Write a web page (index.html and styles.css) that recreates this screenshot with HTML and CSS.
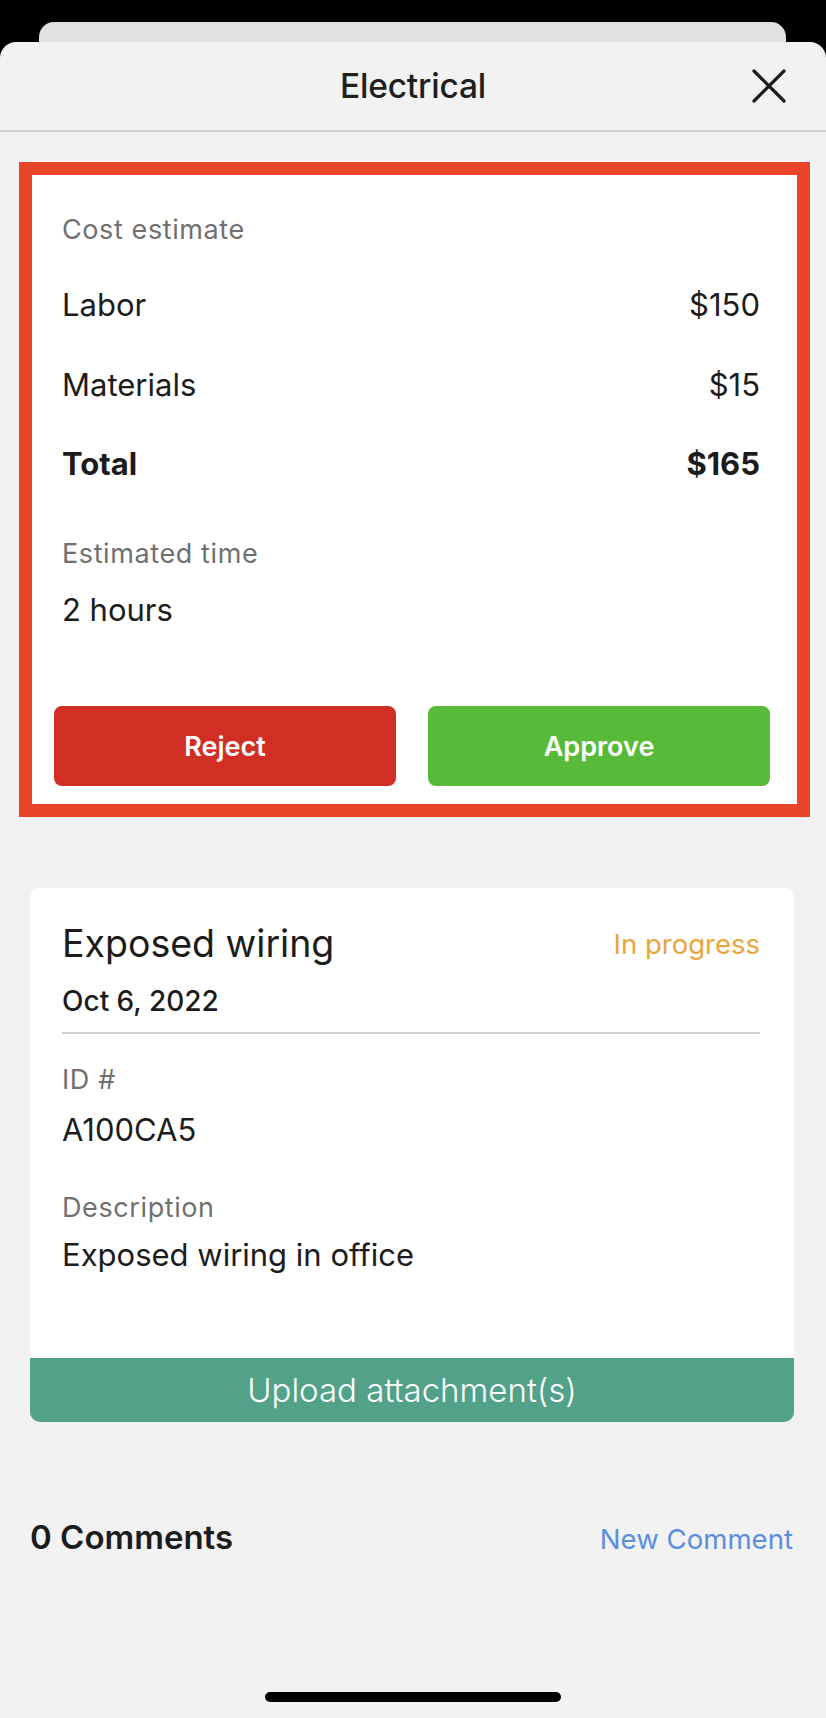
FILE: index.html
```html
<!DOCTYPE html>
<html lang="en">
<head>
<meta charset="utf-8">
<title>Electrical</title>
<link rel="stylesheet" href="styles.css">
</head>
<body>
<div class="screen">
  <div class="back-card"></div>
  <div class="sheet">
    <header class="sheet-header">
      <h1 class="sheet-title">Electrical</h1>
      <button class="close-btn" aria-label="Close">
        <svg width="34" height="34" viewBox="0 0 34 34">
          <path d="M2 2 L32 32 M32 2 L2 32" stroke="#1c1c1c" stroke-width="3.2" stroke-linecap="round" fill="none"/>
        </svg>
      </button>
    </header>

    <section class="estimate">
      <div class="estimate-inner">
        <div class="label first">Cost estimate</div>
        <div class="cost-row r-labor"><span>Labor</span><span>$150</span></div>
        <div class="cost-row r-mat"><span>Materials</span><span>$15</span></div>
        <div class="cost-row r-total total"><span>Total</span><span>$165</span></div>
        <div class="label r-est">Estimated time</div>
        <div class="value r-hours">2 hours</div>
        <div class="actions">
          <button class="btn btn-reject">Reject</button>
          <button class="btn btn-approve">Approve</button>
        </div>
      </div>
    </section>

    <section class="issue-card">
      <div class="issue-body">
        <div class="issue-head">
          <h2 class="issue-title">Exposed wiring</h2>
          <span class="status">In progress</span>
        </div>
        <div class="issue-date">Oct 6, 2022</div>
        <div class="divider"></div>
        <div class="label r-id">ID #</div>
        <div class="value r-idv">A100CA5</div>
        <div class="label r-desc">Description</div>
        <div class="value r-descv">Exposed wiring in office</div>
      </div>
      <button class="upload-btn">Upload attachment(s)</button>
    </section>

    <div class="comments-row">
      <span class="comments-count">0 Comments</span>
      <span class="new-comment">New Comment</span>
    </div>

    <div class="home-indicator"></div>
  </div>
</div>
</body>
</html>
```

FILE: styles.css
```css
* { box-sizing: border-box; }
html, body {
  margin: 0;
  padding: 0;
  background: #000;
}
body {
  font-family: Inter, "Noto Sans", "Liberation Sans", sans-serif;
  color: #1c1c1c;
  width: 826px;
  height: 1718px;
  overflow: hidden;
}
.screen {
  position: relative;
  width: 826px;
  height: 1718px;
  padding-top: 22px;
}
.back-card {
  margin: 0 40px 0 39px;
  height: 40px;
  background: #e0e0e0;
  border-radius: 15px 15px 0 0;
}
.sheet {
  margin-top: -20px;
  background: #f2f2f2;
  border-radius: 16px 16px 0 0;
  height: 1676px;
  display: flex;
  flex-direction: column;
}
.sheet-header {
  position: relative;
  height: 90px;
  border-bottom: 2px solid #cfcfcf;
  display: flex;
  align-items: center;
  justify-content: center;
}
.sheet-title {
  margin: 0;
  font-size: 33.5px;
  font-weight: 500;
  line-height: 40px;
  letter-spacing: -0.2px;
  color: #1f1f1f;
}
.close-btn {
  position: absolute;
  right: 40px;
  top: 27px;
  width: 34px;
  height: 34px;
  padding: 0;
  border: 0;
  background: none;
}
.close-btn svg { display: block; }

.estimate {
  margin: 30px 16px 0 19px;
  border: 13px solid #e9432a;
  background: #fff;
}
.estimate-inner {
  padding: 39px 37px 18px 30px;
}
.label {
  font-size: 27px;
  line-height: 32px;
  letter-spacing: 0.6px;
  color: #707070;
}
.value {
  font-size: 31px;
  line-height: 40px;
  color: #1c1c1c;
}
.cost-row {
  display: flex;
  justify-content: space-between;
  font-size: 31px;
  line-height: 40px;
}
.r-labor { margin-top: 39px; }
.r-mat { margin-top: 40px; }
.r-total { margin-top: 39px; }
.total { font-weight: 700; }
.r-est { margin-top: 54px; }
.r-hours { margin-top: 20px; }
.actions {
  margin-top: 76px;
  display: flex;
  gap: 32px;
  margin-left: -8px;
  margin-right: -10px;
}
.btn {
  flex: 1;
  height: 80px;
  border: 0;
  border-radius: 8px;
  color: #fff;
  font-family: inherit;
  font-size: 27px;
  font-weight: 600;
}
.btn-reject { background: #d22f24; }
.btn-approve { background: #57ba38; }

.issue-card {
  margin: 71px 32px 0 30px;
  background: #fff;
  border-radius: 10px;
  overflow: hidden;
}
.issue-body {
  padding: 32px 34px 83px 32px;
}
.issue-head {
  display: flex;
  justify-content: space-between;
  align-items: center;
}
.issue-title {
  margin: 0;
  font-size: 37.5px;
  font-weight: 400;
  line-height: 48px;
  color: #1c1c1c;
}
.status {
  font-size: 27.5px;
  line-height: 48px;
  color: #e9a53e;
}
.issue-date {
  margin-top: 15px;
  font-size: 28px;
  line-height: 36px;
  font-weight: 500;
}
.divider {
  margin-top: 13px;
  height: 2px;
  background: #cfcfcf;
}
.r-id { margin-top: 30px; }
.r-idv { margin-top: 14px; }
.r-desc { margin-top: 42px; }
.r-descv { margin-top: 11px; }
.upload-btn {
  display: block;
  width: 100%;
  height: 64px;
  border: 0;
  background: #52a28a;
  color: #fff;
  font-family: inherit;
  font-size: 33px;
  font-weight: 300;
}

.comments-row {
  margin: 95px 33px 0 30px;
  display: flex;
  justify-content: space-between;
  align-items: baseline;
}
.comments-count {
  font-size: 33px;
  line-height: 40px;
  font-weight: 600;
}
.new-comment {
  font-size: 27.6px;
  line-height: 40px;
  color: #5b8fdc;
}
.home-indicator {
  margin: auto auto 16px;
  width: 296px;
  height: 10px;
  border-radius: 5px;
  background: #000;
}
```
